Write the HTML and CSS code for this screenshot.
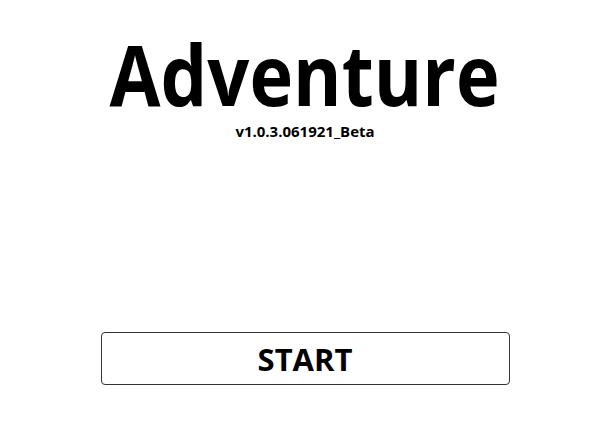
FILE: index.html
```html
<!DOCTYPE html>
<html>
<head>
<meta charset="utf-8">
<link rel="stylesheet" href="styles.css">
</head>
<body>
<main class="screen">
  <h1 class="title">Adventure</h1>
  <div class="version">v1.0.3.061921_Beta</div>
  <button class="start">START</button>
</main>
</body>
</html>
```
FILE: styles.css
```css
html, body {
  margin: 0;
  padding: 0;
  background: #fff;
}
.screen {
  width: 600px;
  height: 446px;
  box-sizing: border-box;
  padding-left: 10px;
  display: flex;
  flex-direction: column;
  align-items: center;
  font-family: "Open Sans", "Noto Sans", sans-serif;
  color: #000;
}
.title {
  margin: 32px 0 0 0;
  font-size: 84px;
  font-weight: 700;
  line-height: 84px;
  transform: scaleX(0.88);
}
.version {
  margin-top: 5px;
  font-size: 15px;
  font-weight: 700;
  line-height: 20px;
}
.start {
  margin-top: 191px;
  width: 409px;
  height: 53px;
  box-sizing: border-box;
  border: 1px solid #333;
  border-radius: 4px;
  background: #fff;
  font-family: "Open Sans", "Noto Sans", sans-serif;
  font-size: 31px;
  font-weight: 700;
  color: #000;
  padding: 0;
}
```
